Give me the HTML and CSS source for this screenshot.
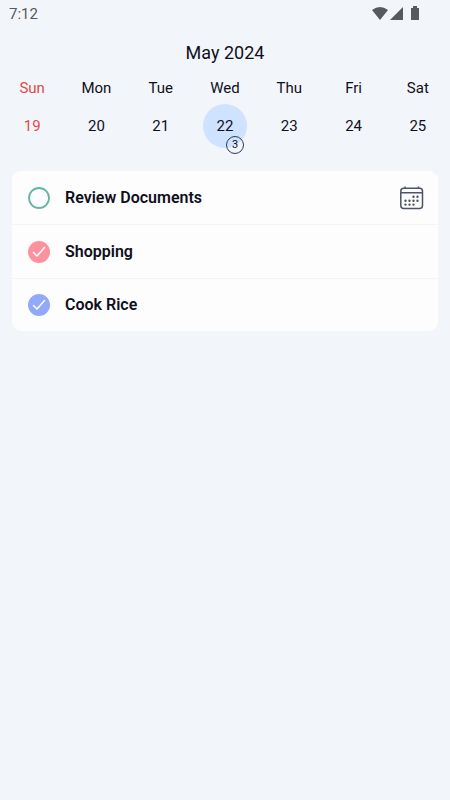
FILE: index.html
```html
<!DOCTYPE html>
<html lang="en">
<head>
<meta charset="utf-8">
<meta name="viewport" content="width=device-width, initial-scale=1">
<title>May 2024</title>
<link rel="stylesheet" href="styles.css">
</head>
<body>
<div class="status">
  <time>7:12</time>
  <svg class="status-icons" width="50" height="16" viewBox="0 0 50 16" aria-hidden="true">
    <path d="M0 4Q8 -2 16 4L8 14Z"/>
    <path d="M18 14L31 1V14Z"/>
    <path d="M39 2h2V0h4v2h2v12h-8Z"/>
  </svg>
</div>
<main>
  <h1>May 2024</h1>
  <div class="week">
    <span class="weekday sunday">Sun</span>
    <span class="weekday">Mon</span>
    <span class="weekday">Tue</span>
    <span class="weekday">Wed</span>
    <span class="weekday">Thu</span>
    <span class="weekday">Fri</span>
    <span class="weekday">Sat</span>
    <button class="day sunday">19</button>
    <button class="day">20</button>
    <button class="day">21</button>
    <button class="day selected">22<span class="count">3</span></button>
    <button class="day">23</button>
    <button class="day">24</button>
    <button class="day">25</button>
  </div>
  <ul class="tasks">
    <li>
      <span class="mark">
        <input class="check" type="checkbox" id="review">
        <svg class="ring" viewBox="0 0 22 22" aria-hidden="true"><circle cx="11" cy="11" r="10"/></svg>
      </span>
      <label for="review">Review Documents</label>
      <button class="calendar" aria-label="Calendar">
        <svg width="24" height="24" viewBox="0 0 24 24" aria-hidden="true">
          <rect x="0.8" y="2.3" width="21.7" height="20.2" rx="3"/>
          <path d="M1 6.8H22.5M5 0.5V3M18.5 0.5V3"/>
          <path class="dots" d="M13.5 10.8h.01M17.5 10.8h.01M5.5 14.7h.01M9.5 14.7h.01M13.5 14.7h.01M17.5 14.7h.01M5.5 18.6h.01M9.5 18.6h.01M13.5 18.6h.01"/>
        </svg>
      </button>
    </li>
    <li>
      <span class="mark">
        <input class="check pink" type="checkbox" id="shopping" checked>
        <svg class="tick" viewBox="0 0 22 22" aria-hidden="true"><path d="M5.5 11.5L9 15L16.5 6.5"/></svg>
      </span>
      <label for="shopping">Shopping</label>
    </li>
    <li>
      <span class="mark">
        <input class="check blue" type="checkbox" id="rice" checked>
        <svg class="tick" viewBox="0 0 22 22" aria-hidden="true"><path d="M5.5 11.5L9 15L16.5 6.5"/></svg>
      </span>
      <label for="rice">Cook Rice</label>
    </li>
  </ul>
</main>
</body>
</html>
```
FILE: styles.css
```css
* {
  box-sizing: border-box;
}

body {
  margin: 0;
  min-height: 100vh;
  background: #f2f5fa;
  color: #10101c;
  font: 15px/20px Roboto, "Liberation Sans", sans-serif;
}

button {
  padding: 0;
  border: 0;
  background: none;
  color: inherit;
  font: inherit;
}

.status {
  display: flex;
  align-items: center;
  justify-content: space-between;
  height: 28px;
  padding: 0 28px 0 9px;
  color: #58595c;
}

.status-icons {
  fill: #58595c;
}

h1 {
  margin: 13px 0;
  font-size: 18px;
  font-weight: 400;
  line-height: 24px;
  text-align: center;
}

.week {
  display: grid;
  grid-template-columns: repeat(7, 1fr);
  justify-items: center;
  row-gap: 6px;
}

.day {
  position: relative;
  width: 44px;
  height: 44px;
  border-radius: 50%;
}

.sunday {
  color: #df4b49;
}

.selected {
  background: #cfe2ff;
}

.count {
  position: absolute;
  right: 3px;
  bottom: -6px;
  width: 18px;
  height: 18px;
  border: 1px solid #2c3a52;
  border-radius: 50%;
  font-size: 11px;
  line-height: 16px;
}

.tasks {
  margin: 23px 12px 0;
  padding: 0;
  overflow: hidden;
  border-radius: 9px;
  background: #fdfdfe;
  list-style: none;
}

.tasks li {
  display: flex;
  align-items: center;
  gap: 15px;
  height: 53px;
  padding: 0 14px 0 16px;
}

.tasks li + li {
  box-sizing: content-box;
  border-top: 1px solid #f3f4f8;
}

.tasks li:last-child {
  box-sizing: border-box;
}

.tasks label {
  flex: 1;
  font-size: 16px;
  font-weight: 600;
}

.mark {
  position: relative;
  display: flex;
}

.check {
  appearance: none;
  width: 22px;
  height: 22px;
  margin: 0;
  border-radius: 50%;
}

.pink {
  background: #fc929d;
}

.blue {
  background: #92a9fb;
}

.ring,
.tick {
  position: absolute;
  inset: 0;
  fill: none;
  stroke: #fff;
  stroke-width: 1.5;
  stroke-linecap: round;
  stroke-linejoin: round;
  pointer-events: none;
}

.ring {
  stroke: #66b5a4;
  stroke-width: 1.8;
}

.calendar {
  display: flex;
}

.calendar svg {
  fill: none;
  stroke: #4b5468;
  stroke-width: 1.5;
}

.calendar .dots {
  stroke-width: 2.4;
  stroke-linecap: round;
}
```
